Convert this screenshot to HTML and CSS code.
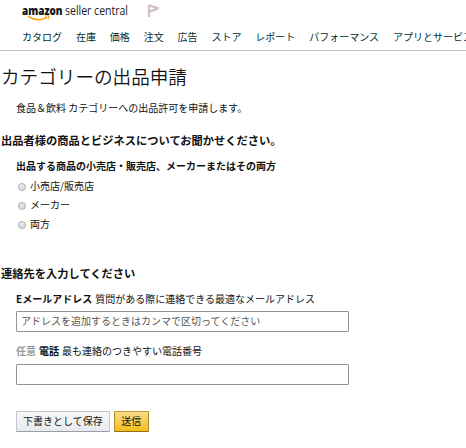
FILE: index.html
```html
<!DOCTYPE html>
<html lang="ja">
<head>
  <meta charset="UTF-8">
  <meta name="viewport" content="width=device-width, initial-scale=1.0">
  <title>カテゴリーの出品申請</title>
  <link rel="stylesheet" href="styles.css">
</head>
<body>
  <header>
    <div class="brand">
      <svg class="logo" width="108" height="20" viewBox="0 0 108 20">
        <text class="logo-amazon" x="0" y="12" textLength="40.5" lengthAdjust="spacingAndGlyphs">amazon</text>
        <text class="logo-seller" x="43" y="12" textLength="63" lengthAdjust="spacingAndGlyphs">seller central</text>
        <path d="M6 13.4 Q15.5 19.5 25.2 14.4" fill="none" stroke="#f90" stroke-width="1.5"/>
        <path d="M23 13.2 Q25.5 12.4 27 13 Q27.2 14.6 25.8 16.4" fill="none" stroke="#f90" stroke-width="1.1"/>
      </svg>
      <svg class="flag" width="14" height="15" viewBox="0 0 14 15">
        <path d="M2 14 V2.4 L11.4 5.4 L2 8.8" fill="none" stroke="#cfc1c1" stroke-width="2.2" stroke-linejoin="bevel"/>
      </svg>
    </div>
    <nav>
      <a>カタログ</a>
      <a>在庫</a>
      <a>価格</a>
      <a>注文</a>
      <a>広告</a>
      <a>ストア</a>
      <a>レポート</a>
      <a>パフォーマンス</a>
      <a>アプリとサービス</a>
    </nav>
  </header>

  <main>
    <h1>カテゴリーの出品申請</h1>
    <p class="intro">食品＆飲料 カテゴリーへの出品許可を申請します。</p>

    <h2>出品者様の商品とビジネスについてお聞かせください。</h2>
    <div class="group">
      <h3>出品する商品の小売店・販売店、メーカーまたはその両方</h3>
      <label class="option"><input type="radio" name="tipo">小売店/販売店</label>
      <label class="option"><input type="radio" name="tipo">メーカー</label>
      <label class="option"><input type="radio" name="tipo">両方</label>
    </div>

    <h2 class="contact">連絡先を入力してください</h2>
    <div class="group">
      <label class="field" for="email"><b>Eメールアドレス</b> 質問がある際に連絡できる最適なメールアドレス</label>
      <input class="text" id="email" type="text" placeholder="アドレスを追加するときはカンマで区切ってください">
      <label class="field" for="tel"><b class="optional">任意</b> <b>電話</b> 最も連絡のつきやすい電話番号</label>
      <input class="text" id="tel" type="text">
      <div class="buttons">
        <button>下書きとして保存</button>
        <button class="primary">送信</button>
      </div>
    </div>
  </main>
</body>
</html>
```
FILE: styles.css
```css
* {
  box-sizing: border-box;
}
body {
  margin: 0;
  background: #fff;
  color: #111;
  font-family: "Noto Sans CJK JP", sans-serif;
  font-size: 10px;
  line-height: 16px;
  overflow: hidden;
}
header {
  height: 51px;
  border-bottom: 1px solid #c4c4c4;
}
.brand {
  display: flex;
  height: 29px;
  padding: 3px 0 0 22px;
}
.logo {
  overflow: visible;
}
.logo-amazon {
  font: 800 12.5px "Open Sans", sans-serif;
  fill: #111;
}
.logo-seller {
  font: 13px "Open Sans", sans-serif;
  fill: #222;
}
.flag {
  margin-left: 17px;
}
nav {
  display: flex;
  gap: 13.9px;
  padding-left: 22px;
  white-space: nowrap;
  color: #002f36;
}
h1 {
  margin: 11px 0 0 1px;
  font-size: 18.6px;
  font-weight: 350;
  line-height: 28px;
}
.intro {
  margin: 10px 0 0 16px;
}
h2 {
  margin: 16px 0 0 1px;
  font-size: 11.25px;
  font-weight: bold;
  line-height: 16px;
}
.group {
  margin-left: 16px;
}
h3 {
  margin: 10px 0 2px;
  font-size: 10px;
  line-height: 16px;
}
.option {
  display: flex;
  align-items: center;
  height: 19px;
}
.option input {
  appearance: none;
  width: 8px;
  height: 8px;
  margin: 3px 4px 0 2px;
  border: 1px solid #adadad;
  border-radius: 50%;
  background: linear-gradient(#e8e8e8, #dcdcdc);
}
.contact {
  margin-top: 32px;
}
.field {
  display: block;
  margin-top: 10px;
  word-spacing: 0.8px;
}
.optional {
  color: #999;
}
.text {
  display: block;
  width: 333px;
  height: 21px;
  margin: 4px 0 0;
  padding: 0 4px 2px;
  border: 1px solid #949494;
  border-radius: 1px;
  font: inherit;
}
.text::placeholder {
  color: #555;
}
.text + .field {
  margin-top: 11px;
}
.text + .field + .text {
  margin-top: 5px;
}
.buttons {
  display: flex;
  gap: 4px;
  margin-top: 26px;
}
button {
  height: 21px;
  padding: 0 6px 1px;
  border: 1px solid #c3c6cd;
  border-bottom-color: #9a9da8;
  border-radius: 1px;
  background: linear-gradient(#f7f8fa, #e7e9ec);
  color: #111;
  font: inherit;
}
.primary {
  padding: 0 6.5px 1px;
  border-color: #c09a35 #b08a28 #946f12;
  background: linear-gradient(#f8dc8c, #f3bd1c);
}
```
